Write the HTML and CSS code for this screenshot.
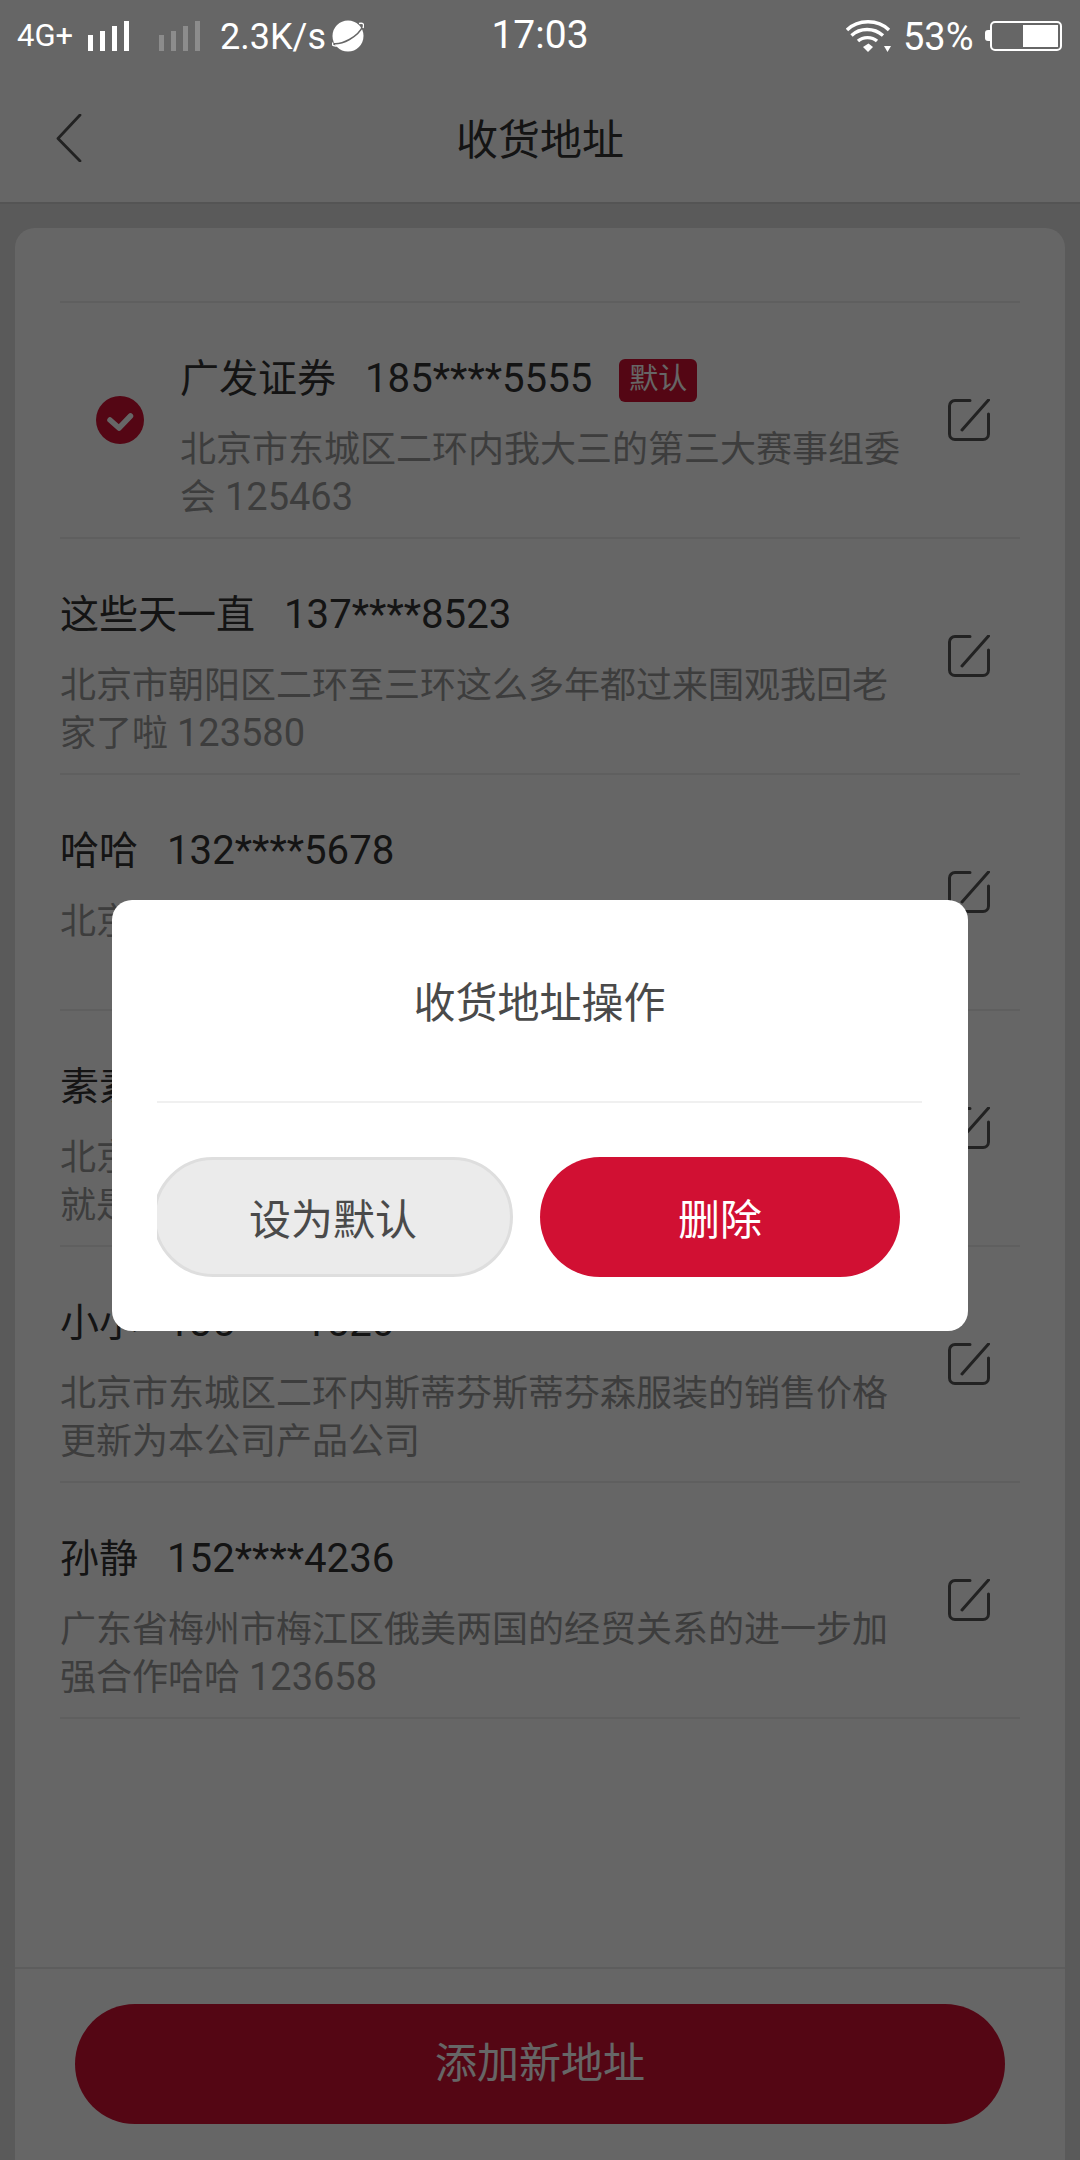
FILE: index.html
```html
<!DOCTYPE html>
<html lang="zh-CN">
<head>
<meta charset="utf-8">
<title>收货地址</title>
<link rel="stylesheet" href="styles.css">
</head>
<body>
<div class="phone">
  <div class="status">
    <div class="status-left">
      <span class="net">4G+</span>
      <svg class="sig" viewBox="0 0 41 30"><rect x="0" y="14" width="5" height="16"/><rect x="12" y="10" width="5" height="20"/><rect x="24" y="5" width="5" height="25"/><rect x="36" y="0" width="5" height="30"/></svg>
      <svg class="sig dim" viewBox="0 0 41 30"><rect x="0" y="14" width="5" height="16"/><rect x="12" y="10" width="5" height="20"/><rect x="24" y="5" width="5" height="25"/><rect x="36" y="0" width="5" height="30"/></svg>
      <span class="speed">2.3K/s</span>
      <svg class="planet" viewBox="0 0 32 32"><circle cx="16" cy="16" r="15.500" fill="#fff"/><path d="M0.500 23.500C10 25 26 17 31 6" fill="none" stroke="#666" stroke-width="1.600"/><path d="M1 22.500C-1 26 3 26.500 7 25.500M27 3.500C31 2.500 32.500 4 31 8" fill="none" stroke="#fff" stroke-width="1.400"/></svg>
    </div>
    <span class="time">17:03</span>
    <div class="status-right">
      <svg class="wifi" viewBox="0 0 45 32"><g fill="none" stroke="#fff" stroke-width="3.400"><path d="M1 10C12 -1 32 -1 43 10"/><path d="M5.500 15.500C14 7.500 28 7.500 37 15.500"/><path d="M12 21C17 16.500 26 16.500 31 21"/></g><path d="M17 27L22.500 23.500L27 27L22 32Z" fill="#fff"/><path d="M38 26H45L41.500 32Z" fill="#fff"/></svg>
      <span class="pct">53%</span>
      <span class="batt-tip"></span>
      <span class="batt"><span class="batt-fill"></span></span>
    </div>
  </div>
  <div class="app">
    <header class="nav">
      <svg class="back" viewBox="0 0 26 48"><path d="M24 1L2 24.500L24 47" fill="none" stroke-width="2.800" stroke-linecap="round" stroke-linejoin="round"/></svg>
      <h1 class="nav-title">收货地址</h1>
    </header>
    <main class="body">
      <section class="card">
        <ul class="list">
          <li class="row">
            <svg class="check" viewBox="0 0 48 48"><circle cx="24" cy="24" r="24" fill="#d11033"/><path d="M14 24L23 32L34.500 20" fill="none" stroke="#fff" stroke-width="5.500" stroke-linecap="round" stroke-linejoin="round"/></svg>
            <div class="info">
              <div class="who"><span class="name">广发证券</span><span class="tel">185****5555</span><span class="tag">默认</span></div>
              <p class="addr narrow">北京市东城区二环内我大三的第三大赛事组委会 <span class="zip">125463</span></p>
            </div>
            <svg class="edit" viewBox="0 0 42 42"><path d="M22 1.500H7A5.500 5.500 0 0 0 1.500 7V35A5.500 5.500 0 0 0 7 40.500H35A5.500 5.500 0 0 0 40.500 35V15"/><path d="M14 31L40.500 1"/></svg>
          </li>
          <li class="row">
            <div class="info">
              <div class="who"><span class="name">这些天一直</span><span class="tel">137****8523</span></div>
              <p class="addr">北京市朝阳区二环至三环这么多年都过来围观我回老家了啦 <span class="zip">123580</span></p>
            </div>
            <svg class="edit" viewBox="0 0 42 42"><path d="M22 1.500H7A5.500 5.500 0 0 0 1.500 7V35A5.500 5.500 0 0 0 7 40.500H35A5.500 5.500 0 0 0 40.500 35V15"/><path d="M14 31L40.500 1"/></svg>
          </li>
          <li class="row">
            <div class="info">
              <div class="who"><span class="name">哈哈</span><span class="tel">132****5678</span></div>
              <p class="addr">北京市东城区二环内我大三的第三大赛事 <span class="zip">123456</span></p>
            </div>
            <svg class="edit" viewBox="0 0 42 42"><path d="M22 1.500H7A5.500 5.500 0 0 0 1.500 7V35A5.500 5.500 0 0 0 7 40.500H35A5.500 5.500 0 0 0 40.500 35V15"/><path d="M14 31L40.500 1"/></svg>
          </li>
          <li class="row">
            <div class="info">
              <div class="who"><span class="name">素素</span><span class="tel">135****1520</span></div>
              <p class="addr">北京市东城区二环内我大三的第三大赛事组委会的话就是这样的 <span class="zip">123456</span></p>
            </div>
            <svg class="edit" viewBox="0 0 42 42"><path d="M22 1.500H7A5.500 5.500 0 0 0 1.500 7V35A5.500 5.500 0 0 0 7 40.500H35A5.500 5.500 0 0 0 40.500 35V15"/><path d="M14 31L40.500 1"/></svg>
          </li>
          <li class="row">
            <div class="info">
              <div class="who"><span class="name">小小</span><span class="tel">135****1520</span></div>
              <p class="addr">北京市东城区二环内斯蒂芬斯蒂芬森服装的销售价格更新为本公司产品公司</p>
            </div>
            <svg class="edit" viewBox="0 0 42 42"><path d="M22 1.500H7A5.500 5.500 0 0 0 1.500 7V35A5.500 5.500 0 0 0 7 40.500H35A5.500 5.500 0 0 0 40.500 35V15"/><path d="M14 31L40.500 1"/></svg>
          </li>
          <li class="row">
            <div class="info">
              <div class="who"><span class="name">孙静</span><span class="tel">152****4236</span></div>
              <p class="addr">广东省梅州市梅江区俄美两国的经贸关系的进一步加强合作哈哈 <span class="zip">123658</span></p>
            </div>
            <svg class="edit" viewBox="0 0 42 42"><path d="M22 1.500H7A5.500 5.500 0 0 0 1.500 7V35A5.500 5.500 0 0 0 7 40.500H35A5.500 5.500 0 0 0 40.500 35V15"/><path d="M14 31L40.500 1"/></svg>
          </li>
        </ul>
        <div class="foot"><div class="add">添加新地址</div></div>
      </section>
    </main>
    <div class="mask">
      <div class="dialog">
        <h2 class="dialog-title">收货地址操作</h2>
        <div class="dialog-actions">
          <div class="btn btn-grey">设为默认</div>
          <div class="btn btn-red">删除</div>
        </div>
      </div>
    </div>
  </div>
</div>
</body>
</html>
```
FILE: styles.css
```css
* { box-sizing: border-box; }
html, body { margin: 0; padding: 0; }
body { font-family: Roboto, "Noto Sans CJK SC", sans-serif; background: #666; }
.phone { width: 1080px; height: 2160px; display: flex; flex-direction: column; overflow: hidden; }

.status { height: 71px; flex: none; background: #666; color: #fff; display: flex; align-items: center; justify-content: space-between; position: relative; padding: 0 18px 0 17px; }
.status-left { display: flex; align-items: center; }
.net { font-size: 31px; width: 71px; }
.sig { width: 41px; height: 30px; fill: #fff; margin-right: 30px; }
.sig.dim { opacity: .25; margin-right: 20px; }
.speed { font-size: 36px; width: 112px; padding-top: 2px; }
.planet { width: 32px; height: 32px; }
.time { position: absolute; left: 0; right: 0; text-align: center; font-size: 39px; line-height: 77px; }
.status-right { display: flex; align-items: center; position: relative; }
.wifi { width: 45px; height: 32px; margin-right: 12px; }
.pct { font-size: 38px; width: 82px; padding-top: 2px; }
.batt-tip { width: 5px; height: 11px; background: #fff; border-radius: 3px 0 0 3px; }
.batt { width: 72px; height: 30px; border: 2px solid #fff; border-radius: 5px; display: flex; justify-content: flex-end; padding: 2px; }
.batt-fill { width: 35px; background: #fff; }

.app { flex: 1; position: relative; display: flex; flex-direction: column; background: #e2e2e2; min-height: 0; }
.nav { height: 133px; flex: none; background: #fff; border-bottom: 2px solid #d2d2d2; display: flex; align-items: center; justify-content: center; position: relative; }
.back { position: absolute; left: 56px; top: 43px; width: 26px; height: 48px; stroke: #555; }
.nav-title { margin: 0; font-size: 42px; font-weight: 400; color: #333; }

.body { flex: 1; padding: 24px 15px 0; display: flex; min-height: 0; }
.card { flex: 1; background: #fff; border-radius: 20px 20px 0 0; display: flex; flex-direction: column; padding-top: 73px; }
.list { flex: 1; list-style: none; margin: 0 45px; padding: 0; border-top: 2px solid #eee; }
.row { height: 236px; border-bottom: 2px solid #eee; display: flex; align-items: center; }
.check { width: 48px; height: 48px; flex: none; margin: 0 36px; }
.info { flex: 1; align-self: flex-start; padding-top: 51px; min-width: 0; }
.who { height: 50px; line-height: 50px; font-size: 39px; color: #333; white-space: nowrap; }
.tel { margin-left: 29px; font-size: 40.200px; }
.tag { display: inline-block; vertical-align: 3px; margin-left: 27px; width: 78px; height: 43px; line-height: 41px; text-align: center; background: #d11033; color: #fff; font-size: 29px; border-radius: 6px; }
.addr { margin: 22px 0 0; width: 840px; font-size: 36px; line-height: 48px; color: #999; }
.addr.narrow { width: 730px; }
.zip { font-size: 38px; line-height: 1; }
.edit { width: 42px; height: 42px; flex: none; margin-right: 30px; fill: none; stroke: #555; stroke-width: 3; stroke-linecap: round; }

.foot { flex: none; height: 193px; border-top: 2px solid #e8e8e8; padding: 35px 60px 0; }
.add { height: 120px; border-radius: 60px; background: #d11033; color: #fff; font-size: 42px; line-height: 120px; text-align: center; }

.mask { position: absolute; inset: 0; background: rgba(0,0,0,.6); display: flex; align-items: center; justify-content: center; }
.dialog { width: 856px; height: 431px; background: #fff; border-radius: 20px; padding: 0 46px 0 45px; }
.dialog-title { margin: 0; height: 203px; padding-bottom: 2px; display: flex; align-items: center; justify-content: center; font-size: 42px; font-weight: 400; color: #4a4a4a; border-bottom: 2px solid #f0f0f0; }
.dialog-actions { display: flex; gap: 27px; margin-top: 54px; overflow: hidden; }
.btn { width: 360px; height: 120px; flex: none; border-radius: 60px; font-size: 42px; display: flex; align-items: center; justify-content: center; padding-bottom: 2px; }
.btn-grey { margin-left: -4px; background: #ebebeb; border: 3px solid #dedede; color: #4a4a4a; }
.btn-red { background: #d11033; color: #fff; }
```
